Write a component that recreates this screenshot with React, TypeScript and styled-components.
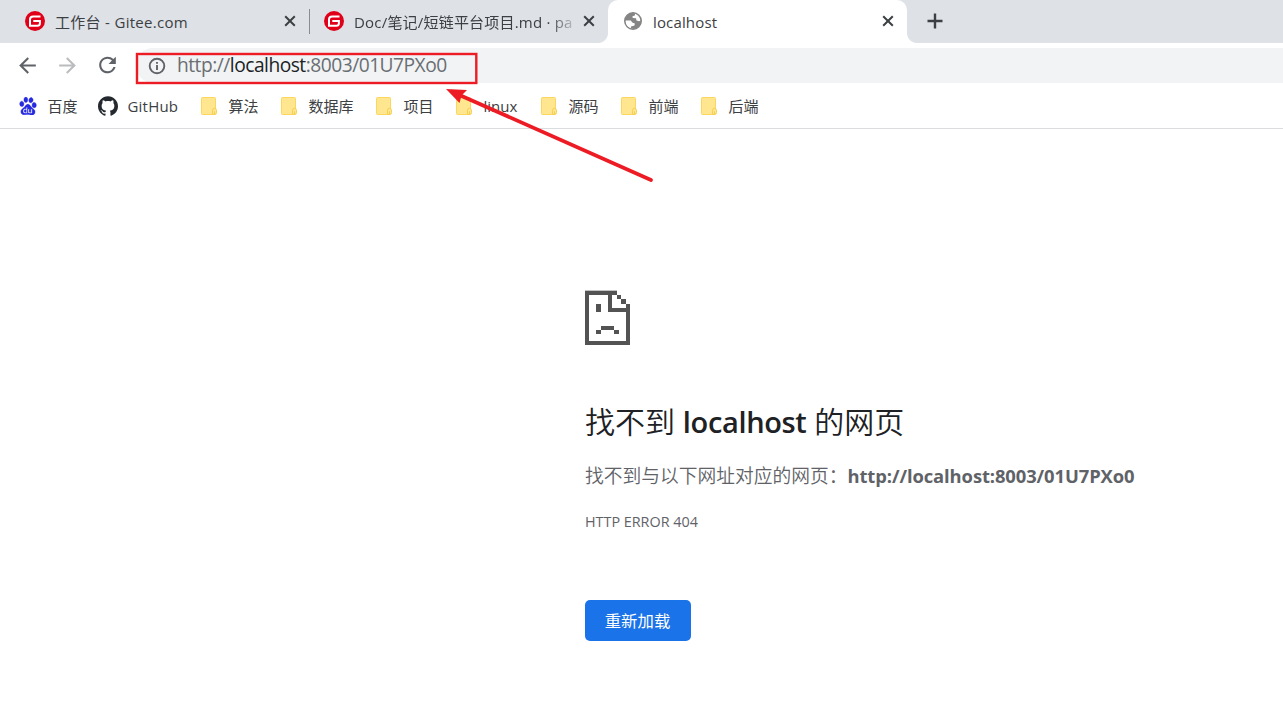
import React from 'react';
import styled, { createGlobalStyle } from 'styled-components';
import { SiBaidu, SiGithub } from 'react-icons/si';
import { MdArrowBack, MdArrowForward, MdRefresh } from 'react-icons/md';

const GlobalStyle = createGlobalStyle`
  * { box-sizing: border-box; }
  body {
    margin: 0;
    background: #fff;
    font-family: 'Open Sans', 'Noto Sans CJK SC', sans-serif;
    color: #3c4043;
    overflow: hidden;
  }
`;

const Browser = styled.div`
  position: relative;
  width: 100%;
  height: 715px;
  overflow: hidden;
`;

const TabStrip = styled.div`
  display: flex;
  height: 43px;
  background: #dee1e6;
`;

const Tab = styled.div<{ $active?: boolean; $width: number; $pad: number }>`
  position: relative;
  display: flex;
  align-items: center;
  flex: none;
  width: ${p => p.$width}px;
  height: 43px;
  padding: 0 13px 1px ${p => p.$pad}px;
  background: ${p => (p.$active ? '#fff' : 'transparent')};
  border-radius: ${p => (p.$active ? '10px 10px 0 0' : '0')};
  &::before, &::after {
    content: '';
    display: ${p => (p.$active ? 'block' : 'none')};
    position: absolute;
    bottom: 0;
    width: 10px;
    height: 10px;
  }
  &::before { left: -10px; background: radial-gradient(circle at 0 0, transparent 9.5px, #fff 10.5px); }
  &::after { right: -10px; background: radial-gradient(circle at 100% 0, transparent 9.5px, #fff 10.5px); }
`;

const TabIcon = styled.span`
  display: flex;
  flex: none;
  justify-content: center;
  width: 20px;
  margin-right: 10px;
`;

const TabTitle = styled.span<{ $spacing?: number; $fade?: boolean }>`
  flex: 1;
  min-width: 0;
  height: 25px;
  line-height: 26px;
  margin-right: 9px;
  font-size: 15px;
  letter-spacing: ${p => p.$spacing ?? 0}px;
  white-space: nowrap;
  mask-image: ${p => (p.$fade ? 'linear-gradient(to right, #000 195px, transparent 226px)' : 'none')};
`;

const Separator = styled.span`
  flex: none;
  align-self: center;
  width: 1px;
  height: 25px;
  background: #898c91;
`;

const NewTab = styled.span`
  display: flex;
  align-items: center;
  margin-left: 20px;
  padding-bottom: 1px;
`;

const Toolbar = styled.div`
  display: flex;
  align-items: center;
  height: 45px;
  padding: 0 0 0 15px;
`;

const NavButton = styled.span<{ $dim?: boolean }>`
  display: flex;
  justify-content: center;
  width: 25px;
  margin-right: 15px;
  padding-bottom: 1px;
  color: ${p => (p.$dim ? '#babcbe' : '#5f6368')};
`;

const Omnibox = styled.div`
  display: flex;
  align-items: center;
  flex: 1;
  height: 35px;
  margin-left: 1px;
  padding-left: 12px;
  color: #5f6368;
  background: #f1f3f4;
  border-radius: 17px 0 0 17px;
`;

const Url = styled.span`
  margin-left: 11px;
  padding-bottom: 2px;
  font-size: 19.2px;
  line-height: 28px;
  letter-spacing: -0.5px;
  white-space: nowrap;
  color: #6a6e73;
  b { font-weight: 400; color: #202124; }
`;

const BookmarkBar = styled.div`
  display: flex;
  height: 41px;
  padding-left: 18px;
  border-bottom: 1px solid #dadce0;
`;

const Bookmark = styled.div<{ $width: number }>`
  display: flex;
  align-items: center;
  flex: none;
  width: ${p => p.$width}px;
  height: 36px;
  font-size: 15px;
  white-space: nowrap;
`;

const BookmarkIcon = styled.span<{ $color?: string }>`
  display: flex;
  justify-content: center;
  flex: none;
  width: 20px;
  margin-right: 9.5px;
  color: ${p => p.$color ?? 'inherit'};
`;

const Label = styled.span<{ $spacing?: number }>`
  padding-bottom: 1px;
  letter-spacing: ${p => p.$spacing ?? 0}px;
`;

const ErrorPage = styled.main`
  display: flex;
  flex-direction: column;
  align-items: flex-start;
  padding: 161px 0 0 585px;
  color: #5f6368;
  white-space: nowrap;
`;

const Title = styled.h1`
  margin: 52px 0 0;
  font-size: 30px;
  line-height: 48px;
  font-weight: 350;
  color: #202124;
  b { font-size: 29px; font-weight: 550; letter-spacing: -0.35px; }
`;

const Message = styled.p`
  margin: 16px 0 0;
  font-size: 18.75px;
  line-height: 28px;
  font-weight: 350;
  b { font-size: 18.4px; font-weight: 700; letter-spacing: -0.1px; }
`;

const ErrorCode = styled.div`
  margin-top: 22px;
  font-size: 14.4px;
  line-height: 20px;
  letter-spacing: -0.02px;
`;

const Reload = styled.button`
  width: 106px;
  height: 41px;
  margin-top: 68px;
  padding: 0 1px 1px 0;
  border: 0;
  border-radius: 5px;
  background: #1a73e8;
  color: #fff;
  font: 400 16.4px/24px 'Noto Sans CJK SC', sans-serif;
`;

const Annotation = styled.svg`
  position: absolute;
  top: 0;
  left: 0;
  pointer-events: none;
`;

const Close = () => (
  <svg width="12" height="12" viewBox="0 0 12 12" stroke="#3c4043" strokeWidth="2">
    <path d="M1.2 1.2 10.8 10.8M10.8 1.2 1.2 10.8" />
  </svg>
);

const Gitee = () => (
  <svg width="20" height="20" viewBox="0 0 20 20" fill="none">
    <circle cx="10" cy="10" r="10" fill="#e1001a" />
    <path d="M15.500 5.400H8.200Q5 5.400 5 8.600V14.800H12.300Q14.900 14.800 14.900 12.300V10H8.300" stroke="#fff" strokeWidth="2" />
  </svg>
);

const Globe = () => (
  <svg width="18" height="18" viewBox="0 0 18 18">
    <circle cx="9" cy="9" r="8.200" fill="#fff" stroke="#858585" strokeWidth="1.600" />
    <path
      fill="#858585"
      d="M1 8.500C1 4 4.500 .8 9 .8L11.200 1.500 10.800 3.500 8.500 4.200 8.700 6 12 6.200 12.500 8.500 15 9.200 17 8.500C17.200 13 13.500 17 9.500 17L6.800 16.300 7 14.500 10.500 13.500 10.800 11.500 8.300 10.500 6.800 8.600Z"
    />
    <path fill="#fff" d="M1.800 9.500H6L8.200 11.500 9.800 12.300 9.500 13.300 6.500 13.600 5.800 15.500C3.500 14.300 2 12.300 1.800 9.500Z" />
  </svg>
);

const Info = () => (
  <svg width="18" height="18" viewBox="0 0 18 18" fill="none" stroke="#5f6368">
    <circle cx="9" cy="9" r="7.300" strokeWidth="1.900" />
    <path d="M9 8v5M9 4.900v1.900" strokeWidth="1.900" />
  </svg>
);

const Folder = () => (
  <svg width="18" height="20" viewBox="0 0 18 20">
    <rect x="1.5" y="1.5" width="14" height="17" rx="1" fill="#ffe68f" stroke="#fbd75e" />
    <path d="M12.5 18.5v-4q0-2.3 2-2.3t2 2.3v2q0 2-2 2z" fill="#ffe68f" stroke="#f7cf50" />
    <path d="M14.5 18.3v-3" stroke="#f7cf50" />
  </svg>
);

const SadPage = () => (
  <svg width="45" height="56" viewBox="0 0 45 56" fill="#535353" shapeRendering="crispEdges">
    <path d="M0 0H32V1H0Z" opacity="0.35" />
    <path fillRule="evenodd" d="M0 1H32V5H27V18H41V14H45V55H0ZM4 5V51H41V22H23V5Z" />
    <path d="M32 5h4v4h-4zM36 9h5v5h-5zM11 14h4.500v8h-4.500zM15.500 36h13v4h-13zM11 40h4.500v4h-4.500zM28.500 40h5v4h-5z" />
  </svg>
);

const folders: [string, number][] = [
  ['算法', 80], ['数据库', 95], ['项目', 80], ['linux', 85], ['源码', 80], ['前端', 80], ['后端', 80],
];

export default function App() {
  return (
    <Browser>
      <GlobalStyle />
      <TabStrip>
        <Tab $width={309} $pad={25}>
          <TabIcon><Gitee /></TabIcon>
          <TabTitle $spacing={0.3}>工作台 - Gitee.com</TabTitle>
          <Close />
        </Tab>
        <Separator />
        <Tab $width={298} $pad={14}>
          <TabIcon><Gitee /></TabIcon>
          <TabTitle $fade $spacing={0.2}>Doc/笔记/短链平台项目.md · pa</TabTitle>
          <Close />
        </Tab>
        <Tab $active $width={299} $pad={15}>
          <TabIcon><Globe /></TabIcon>
          <TabTitle $spacing={0.15}>localhost</TabTitle>
          <Close />
        </Tab>
        <NewTab>
          <svg width="16" height="16" viewBox="0 0 16 16" stroke="#3c4043" strokeWidth="2.4">
            <path d="M8 .5v15M.5 8h15" />
          </svg>
        </NewTab>
      </TabStrip>
      <Toolbar>
        <NavButton><MdArrowBack size={25} /></NavButton>
        <NavButton $dim><MdArrowForward size={25} /></NavButton>
        <NavButton><MdRefresh size={26} /></NavButton>
        <Omnibox>
          <Info />
          <Url>http://<b>localhost</b>:8003/01U7PXo0</Url>
        </Omnibox>
      </Toolbar>
      <BookmarkBar>
        <Bookmark $width={80}>
          <BookmarkIcon $color="#2529e0"><SiBaidu size={18} stroke="currentColor" strokeWidth={0.5} /></BookmarkIcon>
          <Label>百度</Label>
        </Bookmark>
        <Bookmark $width={101}>
          <BookmarkIcon $color="#24292f"><SiGithub size={20} /></BookmarkIcon>
          <Label $spacing={0.2}>GitHub</Label>
        </Bookmark>
        {folders.map(([name, width]) => (
          <Bookmark key={name} $width={width}>
            <BookmarkIcon><Folder /></BookmarkIcon>
            <Label>{name}</Label>
          </Bookmark>
        ))}
      </BookmarkBar>
      <ErrorPage>
        <SadPage />
        <Title>找不到 <b>localhost</b> 的网页</Title>
        <Message>找不到与以下网址对应的网页：<b>http://localhost:8003/01U7PXo0</b></Message>
        <ErrorCode>HTTP ERROR 404</ErrorCode>
        <Reload>重新加载</Reload>
      </ErrorPage>
      <Annotation width="700" height="200" viewBox="0 0 700 200">
        <rect x="137" y="54" width="339.300" height="29" fill="none" stroke="#ed1c24" strokeWidth="2.400" />
        <path d="M460 95.200 651 180" stroke="#ed1c24" strokeWidth="3.700" strokeLinecap="round" />
        <path d="M446 89 467 90 461.500 95.500 459.500 103Z" fill="#ed1c24" />
      </Annotation>
    </Browser>
  );
}
